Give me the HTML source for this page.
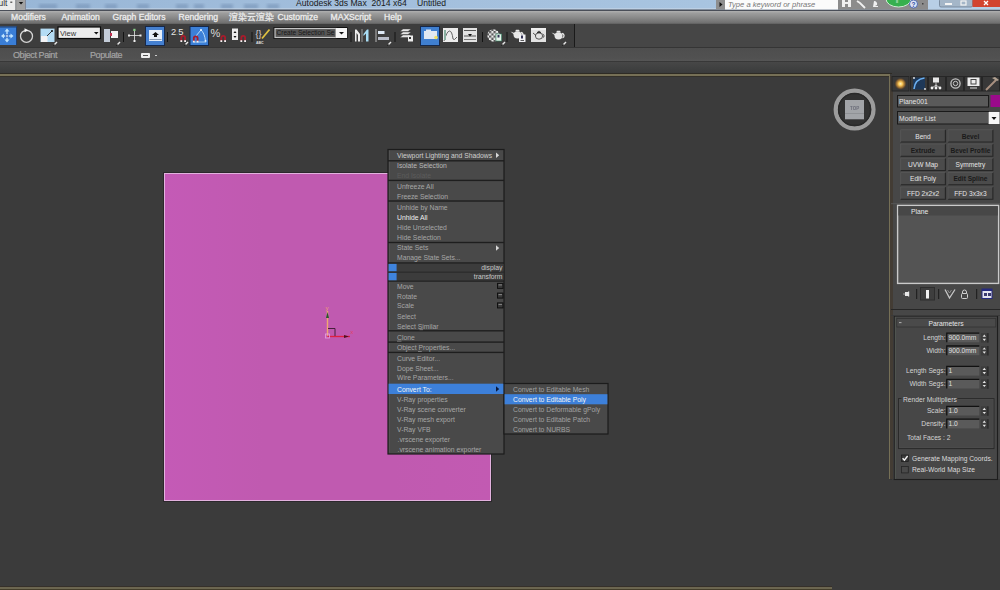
<!DOCTYPE html><html><head><meta charset="utf-8"><style>
*{margin:0;padding:0;box-sizing:border-box}
html,body{width:1000px;height:590px;overflow:hidden;background:#3b3b3b;font-family:"Liberation Sans",sans-serif;position:relative}
.a{position:absolute}
.t{position:absolute;white-space:nowrap;line-height:1}
.mt{color:#f4f4f4;font-size:8.6px;top:12.9px;-webkit-text-stroke:0.3px #e8e8e8}
.menu{background:#494949;}
.mi{position:absolute;font-size:6.8px;color:#a0a0a0;white-space:nowrap;line-height:1}
.sep{position:absolute;height:1px;background:#1c1c1c}
.pt{position:absolute;font-size:6.7px;color:#d0d0d0;white-space:nowrap;line-height:1}
.btn{position:absolute;background:#4c4c4c;border:1px solid #2a2a2a;border-top-color:#5a5a5a;border-left-color:#5a5a5a}
.fld{position:absolute;background:#5e5e5e;border:1px solid #1e1e1e}
</style></head><body>
<svg class="a" style="left:0;top:0" width="1000" height="11" viewBox="0 0 1000 11"><defs><linearGradient id="tg" x1="0" x2="1"><stop offset="0" stop-color="#98b6d6"/><stop offset="0.35" stop-color="#a2bedc"/><stop offset="0.7" stop-color="#a8c4e0"/><stop offset="1" stop-color="#b4cce4"/></linearGradient><filter id="bl"><feGaussianBlur stdDeviation="1.5"/></filter></defs><rect x="0" y="0" width="1000" height="10" fill="url(#tg)"/><g filter="url(#bl)" fill="#6f8cb0" opacity="0.55"><rect x="39.0" y="4" width="18" height="5"/><rect x="76.0" y="4" width="14" height="5"/><rect x="105.0" y="4" width="12" height="5"/><rect x="137.0" y="4" width="12" height="5"/><rect x="176.0" y="4" width="12" height="5"/><rect x="194.0" y="4" width="10" height="5"/><rect x="221.0" y="4" width="12" height="5"/><rect x="244.0" y="4" width="14" height="5"/><rect x="267.0" y="4" width="12" height="5"/></g><rect x="0" y="8.5" width="1000" height="1" fill="#d0dcea"/><rect x="0" y="9.5" width="1000" height="1.5" fill="#4a4e58"/><rect x="0" y="0" width="15.5" height="10" fill="#ececec"/><text x="-1.5" y="6" font-size="8.5" fill="#333" font-family="Liberation Sans">ult</text><rect x="10.3" y="1.5" width="2" height="1.5" fill="#666"/><rect x="15.5" y="0" width="10" height="10" fill="#a2a2a2"/><rect x="15.5" y="0" width="0.8" height="10" fill="#808080"/><rect x="25.2" y="0" width="0.8" height="10" fill="#7a8090"/><path d="M18.8 2 h4.4 l-2.2 2.4z" fill="#111"/><text x="296" y="6" font-size="8.6" fill="#1a1a1a" font-family="Liberation Sans">Autodesk 3ds Max&#160; 2014 x64</text><text x="417" y="6" font-size="8.6" fill="#1a1a1a" font-family="Liberation Sans">Untitled</text><rect x="716" y="0" width="9" height="9.5" fill="#8e8e8e"/><path d="M719.5 2 v5 l3 -2.5z" fill="#111"/><rect x="725" y="0" width="113" height="9.5" fill="#fbfbfb"/><text x="728" y="6.5" font-size="7.6" font-style="italic" fill="#777" font-family="Liberation Sans">Type a keyword or phrase</text><rect x="838" y="0" width="90" height="9.5" fill="#8c8c8c"/><g fill="#f0f0f0"><rect x="842" y="0" width="3" height="7"/><rect x="848" y="0" width="3" height="7"/><rect x="844" y="2" width="5" height="2"/></g><path d="M857 1 l3 2 l5 5" stroke="#f0f0f0" stroke-width="1.8" fill="none"/><path d="M874 1 a3 3 0 0 1 3 4 l-2 1 h3 v1 h-5z" fill="#f0f0f0"/><ellipse cx="898.5" cy="-1" rx="12.5" ry="8" fill="#36b04e" stroke="#cfeed4" stroke-width="1"/><text x="896" y="3" font-size="5" fill="#e8f8e8" font-family="Liberation Sans">ll</text><circle cx="913.5" cy="4" r="4" fill="#dde4f4" stroke="#3a5ab0" stroke-width="0.8"/><text x="911.5" y="6.8" font-size="6.5" fill="#2a4aa0" font-family="Liberation Sans" font-weight="bold">?</text><rect x="922" y="3" width="1.5" height="1.5" fill="#444"/><rect x="928" y="0" width="72" height="9.5" fill="#b8cfe6"/><rect x="939.5" y="-1" width="33" height="8" rx="1.5" fill="#a4b6c8" stroke="#6c7e92" stroke-width="0.8"/><rect x="945" y="3" width="7" height="2" fill="#f4f4f4"/><rect x="961" y="1" width="5" height="4" fill="none" stroke="#f4f4f4" stroke-width="1.2"/><rect x="972.5" y="-1" width="27.5" height="8" fill="#d24430"/><path d="M984 1 l4 4 M988 1 l-4 4" stroke="#fff" stroke-width="1.3"/></svg>
<div class="a" style="left:0;top:11px;width:1000px;height:13px;background:linear-gradient(#b0b0b0,#9c9c9c 18%,#8a8a8a 50%,#727272 88%,#5e5e5e)"></div>
<div class="t mt" style="left:11px">Modifiers</div>
<div class="t mt" style="left:61.5px">Animation</div>
<div class="t mt" style="left:112.5px">Graph Editors</div>
<div class="t mt" style="left:178.5px">Rendering</div>
<div class="t mt" style="left:229px">渲染云渲染</div>
<div class="t mt" style="left:277.5px">Customize</div>
<div class="t mt" style="left:330.5px">MAXScript</div>
<div class="t mt" style="left:384px">Help</div>
<div class="a" style="left:0;top:24px;width:1000px;height:24px;background:#464646"></div>
<div class="a" style="left:0;top:24px;width:575px;height:24px;background:#3d3d3d;border-right:1px solid #1a1a1a"></div>
<div class="a" style="left:0;top:47px;width:1000px;height:1px;background:#353535"></div>
<svg class="a" style="left:0;top:0" width="580" height="50" viewBox="0 0 580 50"><rect x="0" y="26.5" width="16.5" height="18.5" fill="#3a7ed6"/><rect x="0" y="26.5" width="16.5" height="1" fill="#1e3f70"/><rect x="16" y="26.5" width="1" height="18.5" fill="#1e3f70"/><g fill="#bfe4ff"><path d="M7 28.5 l2.5 3 h-5z"/><path d="M7 42.5 l2.5 -3 h-5z"/><path d="M1 36 l3 -2.5 v5z"/><path d="M13.5 36 l-3 -2.5 v5z"/><rect x="6.3" y="31" width="1.4" height="9"/><rect x="3" y="35.3" width="8" height="1.4"/></g><circle cx="7" cy="36" r="1.8" fill="#2a5ab0"/><circle cx="7" cy="36" r="0.9" fill="#e8f4ff"/><circle cx="26.5" cy="36.3" r="6" fill="none" stroke="#d4d4d4" stroke-width="1.3"/><path d="M24.5 28.3 l4 2 -4 2z" fill="#f4f4f4"/><rect x="40.5" y="28.6" width="14" height="13.4" fill="#b4dcf4"/><rect x="41" y="36" width="6.5" height="6" fill="#f2f2f4"/><path d="M47 36 L52 31" stroke="#333" stroke-width="1"/><circle cx="52" cy="31" r="1" fill="#111"/><path d="M54 45 L57 42" stroke="#e8e8e8" stroke-width="1.4"/><path d="M53.5 45.5 l1 -1" stroke="#111" stroke-width="1.2"/><rect x="58" y="27" width="42.5" height="11.5" fill="#ececec" stroke="#0a0a0a" stroke-width="1.2"/><path d="M94 32 h4.5 l-2.25 2.5z" fill="#111"/><text x="60" y="36" font-size="7.5" fill="#333" font-family="Liberation Sans">View</text><rect x="104" y="29" width="6" height="13" fill="#c4ccd8"/><rect x="111" y="31" width="7" height="7" fill="#f4f4f4"/><rect x="110" y="33" width="2" height="3" fill="#c03050"/><path d="M117 45 L120 42" stroke="#e8e8e8" stroke-width="1.4"/><path d="M116.5 45.5 l1 -1" stroke="#111" stroke-width="1.2"/><rect x="123" y="32" width="1" height="10" fill="#141414"/><path d="M129 35.5 h11 M134.5 30 v11" stroke="#e8e8e8" stroke-width="0.8"/><rect x="128" y="34.5" width="2" height="2" fill="#f0f0f0"/><rect x="139.5" y="34.5" width="2" height="2" fill="#f0f0f0"/><rect x="133.5" y="40" width="2" height="2" fill="#f0f0f0"/><rect x="133.3" y="28.8" width="2.2" height="2.2" fill="#8ad08a"/><rect x="145.5" y="26.5" width="19" height="19" fill="#4580d0" stroke="#16284a" stroke-width="1"/><rect x="149" y="30" width="13" height="11" fill="#e6eef8"/><rect x="149.5" y="39" width="12" height="1" fill="#8a9ab0"/><path d="M155.5 32 l3.5 3 h-2 v2 h-3 v-2 h-2z" fill="#111"/><rect x="167" y="32" width="1" height="10" fill="#141414"/><text x="171" y="35.3" font-size="9.3" fill="#e6e6e6" font-family="Liberation Sans">2</text><text x="178.3" y="35.3" font-size="9.3" fill="#e6e6e6" font-family="Liberation Sans">5</text><circle cx="177" cy="34.5" r="0.6" fill="#6a8a6a"/><path d="M181.3 41 V37.8 a1.9 1.9 0 0 1 3.8 0 V41" fill="none" stroke="#a81c2c" stroke-width="1.8"/><rect x="180.4" y="40.2" width="1.8" height="1.8" fill="#f4f4f4"/><rect x="184.2" y="40.2" width="1.8" height="1.8" fill="#f4f4f4"/><path d="M185 45 L188 42" stroke="#e8e8e8" stroke-width="1.4"/><path d="M184.5 45.5 l1 -1" stroke="#111" stroke-width="1.2"/><rect x="190" y="26.5" width="18.5" height="19" fill="#3c80d8" stroke="#16284a" stroke-width="1"/><path d="M195.5 36.5 L201 30 Q204.5 33 205.5 41" fill="none" stroke="#b8dcf8" stroke-width="1"/><circle cx="201" cy="30" r="1.1" fill="#e8f4ff"/><circle cx="205.5" cy="41" r="1" fill="#e8f4ff"/><path d="M194 42 h12" stroke="#b8dcf8" stroke-width="0.8"/><path d="M193.8 41.5 V38.3 a1.9 1.9 0 0 1 3.8 0 V41.5" fill="none" stroke="#a81c2c" stroke-width="1.8"/><rect x="192.9" y="40.7" width="1.8" height="1.8" fill="#f4f4f4"/><rect x="196.7" y="40.7" width="1.8" height="1.8" fill="#f4f4f4"/><text x="210.5" y="36.5" font-size="11" fill="#dcdcdc" font-family="Liberation Sans">%</text><path d="M221.3 41 V37.8 a1.9 1.9 0 0 1 3.8 0 V41" fill="none" stroke="#a81c2c" stroke-width="1.8"/><rect x="220.4" y="40.2" width="1.8" height="1.8" fill="#f4f4f4"/><rect x="224.2" y="40.2" width="1.8" height="1.8" fill="#f4f4f4"/><rect x="232" y="28.5" width="6" height="11.5" fill="#ececec"/><path d="M233.5 33 l1.5 -2 l1.5 2z M233.5 36 l1.5 2 l1.5 -2z" fill="#111"/><path d="M241.3 41 V37.8 a1.9 1.9 0 0 1 3.8 0 V41" fill="none" stroke="#a81c2c" stroke-width="1.8"/><rect x="240.4" y="40.2" width="1.8" height="1.8" fill="#f4f4f4"/><rect x="244.2" y="40.2" width="1.8" height="1.8" fill="#f4f4f4"/><rect x="251.5" y="32" width="1" height="10" fill="#141414"/><text x="255.5" y="37" font-size="9" fill="#dcdcdc" font-family="Liberation Sans">{}</text><path d="M262 38.5 L269.5 29.5" stroke="#e0c040" stroke-width="1.8"/><text x="256" y="44" font-size="3.5" fill="#e0e0e0" font-family="Liberation Sans" font-weight="bold">ABC</text><rect x="273.5" y="27" width="74" height="12" fill="#111"/><rect x="275" y="28.5" width="61" height="9" fill="#565656" stroke="#c4c4c4" stroke-width="1.2"/><rect x="336" y="28" width="11" height="10" fill="#f6f6f6"/><path d="M339 32 h5 l-2.5 2.5z" fill="#111"/><text x="276.5" y="35.3" font-size="6.9" fill="#161616" font-family="Liberation Sans" textLength="58" lengthAdjust="spacingAndGlyphs">Create Selection Se</text><rect x="350.5" y="32" width="1" height="10" fill="#141414"/><path d="M355 41.5 V29.5 h1.5 l3.5 4.5 V41.5 h-2 V35 l-1.5 -2 V41.5z" fill="#ececec"/><rect x="361.5" y="29" width="1" height="13" fill="#9a9a9a"/><path d="M368.5 41.5 V29.5 h-1.5 l-3.5 4.5 V36 l2.5 -2.5 V41.5z" fill="#a8dcf4"/><rect x="375.5" y="29" width="1" height="13" fill="#b8b8b8"/><rect x="378" y="31" width="6.5" height="3" fill="#dde8f4"/><rect x="378" y="37" width="11" height="3" fill="#b8bcc8"/><path d="M388 45 L391 42" stroke="#e8e8e8" stroke-width="1.4"/><path d="M387.5 45.5 l1 -1" stroke="#111" stroke-width="1.2"/><rect x="394.5" y="32" width="1" height="10" fill="#141414"/><path d="M400 31.5 l3 -2.5 h8 l-3 2.5z M400 34.5 l3 -2.5 h8 l-3 2.5z M400 37.5 l3 -2.5 h8 l-3 2.5z" fill="#e6e6e6" stroke="#3d3d3d" stroke-width="0.4"/><rect x="408" y="35.5" width="5" height="6" fill="#ececec"/><rect x="409" y="37" width="2" height="2" fill="#333"/><rect x="420.5" y="26.5" width="19" height="19" fill="#3f7fd0" stroke="#16284a" stroke-width="1"/><rect x="424" y="31" width="13" height="8" fill="#dfe8f2"/><rect x="426" y="29.5" width="5" height="2" fill="#dfe8f2"/><circle cx="436" cy="37.5" r="1.8" fill="#f0e060"/><rect x="443" y="28" width="15" height="14" fill="#ececec"/><path d="M444 41 Q447 31 449.5 31 Q452 31 453 39 Q454 41 457 37" fill="none" stroke="#555" stroke-width="0.9"/><rect x="444" y="30" width="2" height="10" fill="#8ab0a0"/><rect x="463" y="28" width="14" height="14" fill="#e2e2e2"/><rect x="464" y="30" width="12" height="1" fill="#555"/><rect x="464" y="35.5" width="12" height="1" fill="#555"/><rect x="464" y="39" width="12" height="1" fill="#777"/><path d="M468 34 h4 l-2 2.5z" fill="#111"/><rect x="482" y="32" width="1" height="10" fill="#141414"/><defs><pattern id="chk" width="4.5" height="4.5" patternUnits="userSpaceOnUse" x="489" y="31"><rect width="4.5" height="4.5" fill="#ececec"/><rect width="2.25" height="2.25" fill="#5a5a5a"/><rect x="2.25" y="2.25" width="2.25" height="2.25" fill="#5a5a5a"/></pattern></defs><circle cx="493.5" cy="35.5" r="6.2" fill="url(#chk)"/><rect x="496" y="34" width="5.5" height="7" fill="#e8f4ec" stroke="#3a8a6a" stroke-width="0.6"/><rect x="497.5" y="35" width="2" height="2.5" fill="#335"/><path d="M502 45 L505 42" stroke="#e8e8e8" stroke-width="1.4"/><path d="M501.5 45.5 l1 -1" stroke="#111" stroke-width="1.2"/><rect x="506.5" y="32" width="1" height="10" fill="#141414"/><g fill="#e8e8e8"><path d="M510.5 31.5 L514.0 34.5 L514.5 33.0z"/><ellipse cx="517.5" cy="34.8" rx="4" ry="3.6"/><path d="M521.0 32.5 a2.2 2.2 0 0 1 0.5 4.3" fill="none" stroke="#e8e8e8" stroke-width="1.3"/><rect x="515.5" y="29.8" width="4" height="1.8" rx="0.9"/></g><rect x="519" y="34.5" width="6.5" height="7.5" fill="#f0f0f4"/><rect x="521" y="35.5" width="2" height="3" fill="#335"/><rect x="520.5" y="40" width="3.5" height="0.8" fill="#333"/><rect x="531" y="28" width="15" height="14" fill="#e2e2e2"/><rect x="531" y="28" width="15" height="2" fill="#f0f0f0"/><path d="M533 33 L536 35.5" stroke="#333" stroke-width="0.8"/><ellipse cx="539" cy="36" rx="3.6" ry="3.2" fill="none" stroke="#333" stroke-width="0.8"/><path d="M542.5 34 a2 2 0 0 1 0.3 3.8" fill="none" stroke="#333" stroke-width="0.8"/><rect x="537" y="31.8" width="4" height="1.3" fill="#333"/><circle cx="539" cy="31.5" r="0.7" fill="#111"/><g fill="#e6e6e6"><path d="M551.5 32.5 L555.0 35.5 L555.5 34.0z"/><ellipse cx="558.5" cy="35.8" rx="4" ry="3.6"/><path d="M562.0 33.5 a2.2 2.2 0 0 1 0.5 4.3" fill="none" stroke="#e6e6e6" stroke-width="1.3"/><rect x="556.5" y="30.8" width="4" height="1.8" rx="0.9"/></g><path d="M563 45 L566 42" stroke="#e8e8e8" stroke-width="1.4"/><path d="M562.5 45.5 l1 -1" stroke="#111" stroke-width="1.2"/></svg>
<div class="a" style="left:0;top:48px;width:1000px;height:13px;background:linear-gradient(#4e4e4e,#515151 80%,#555)"></div>
<div class="t" style="left:13px;top:51.2px;font-size:9px;letter-spacing:-0.42px;color:#a6a6a6;-webkit-text-stroke:0.2px #a0a0a0">Object Paint</div>
<div class="t" style="left:90px;top:51.2px;font-size:9px;letter-spacing:-0.42px;color:#a6a6a6;-webkit-text-stroke:0.2px #a0a0a0">Populate</div>
<div class="a" style="left:141px;top:52.5px;width:9px;height:5px;background:#f0f0f0;border-radius:1px"></div>
<div class="a" style="left:143px;top:54.5px;width:5px;height:1px;background:#555"></div>
<div class="a" style="left:155px;top:55px;width:2px;height:1px;background:#ccc"></div>
<div class="a" style="left:0;top:61px;width:1000px;height:1px;background:#383838"></div>
<div class="a" style="left:0;top:62px;width:1000px;height:11px;background:linear-gradient(#474747,#3f4040 60%,#3a3b3b)"></div>
<div class="a" style="left:0;top:72.5px;width:892px;height:1.5px;background:#2e2b24"></div>
<div class="a" style="left:0;top:74px;width:890px;height:1.5px;background:#767056"></div>
<div class="a" style="left:0;top:75.5px;width:889px;height:1px;background:#34312a"></div>
<div class="a" style="left:888.8px;top:74px;width:1.4px;height:405px;background:#767056"></div>
<div class="a" style="left:890.2px;top:75.5px;width:1.5px;height:404px;background:#333"></div>
<div class="a" style="left:0;top:585.5px;width:832px;height:1.5px;background:#36302a"></div>
<div class="a" style="left:0;top:587px;width:832px;height:1.6px;background:#6c6650"></div>
<div class="a" style="left:0;top:588.6px;width:832px;height:1.4px;background:#433d2a"></div>
<svg class="a" style="left:820px;top:80px" width="70" height="60" viewBox="820 80 70 60"><defs><filter id="vb"><feGaussianBlur stdDeviation="0.5"/></filter></defs><g filter="url(#vb)"><circle cx="854.6" cy="109.6" r="18.8" fill="#323232" stroke="#9c9c9c" stroke-width="4.4"/><circle cx="854.6" cy="109.6" r="16" fill="none" stroke="#2a2a2a" stroke-width="1.5"/><rect x="845" y="100" width="19" height="19.3" fill="#a2a4a8"/><rect x="845" y="113" width="19" height="1" fill="#909296"/><text x="850" y="109.5" font-size="4.5" fill="#6a6c78" font-family="Liberation Sans" font-weight="bold">TOP</text></g></svg>
<div class="a" style="left:164px;top:173px;width:327px;height:328px;background:linear-gradient(90deg,#c45ab6,#c05ab0 30%,#c05ab0 70%,#c25ab2);border:1.8px solid #e2b2de;box-shadow:0 0 0 1px #2c282c"></div>
<svg class="a" style="left:310px;top:295px" width="60" height="50" viewBox="310 295 60 50"><path d="M327.5 311 V336" stroke="#f0a870" stroke-width="1.4"/><path d="M326 318 l1.5 -6 l1.5 6z" fill="#2a5a2a"/><path d="M327.5 336.5 H350" stroke="#e02040" stroke-width="1.3"/><path d="M344 335 l5 1.5 l-5 1.5z" fill="#501020"/><path d="M328 328.5 H335 V336" fill="none" stroke="#3a1a30" stroke-width="0.9"/><rect x="325.5" y="334" width="4" height="4" fill="none" stroke="#e8a0e0" stroke-width="0.8"/><text x="325.5" y="310" font-size="6" fill="#f0a070" font-family="Liberation Sans">y</text><text x="350.5" y="334" font-size="5.5" fill="#e04060" font-family="Liberation Sans">x</text></svg>
<svg class="a" style="left:380px;top:140px" width="240" height="320" viewBox="380 140 240 320"><rect x="388" y="149.5" width="116" height="304.5" fill="#494949" stroke="#1c1c1c" stroke-width="1.2"/><rect x="389" y="150.5" width="0.8" height="302" fill="#555"/><rect x="388" y="160.1" width="116" height="1.4" fill="#1e1e1e"/><rect x="388" y="179.7" width="116" height="1.4" fill="#1e1e1e"/><rect x="388" y="200.3" width="116" height="1.4" fill="#1e1e1e"/><rect x="388" y="241.8" width="116" height="1.4" fill="#1e1e1e"/><rect x="388" y="262.3" width="116" height="1.4" fill="#1e1e1e"/><rect x="388" y="280.3" width="116" height="1.4" fill="#1e1e1e"/><rect x="388" y="330.1" width="116" height="1.4" fill="#1e1e1e"/><rect x="388" y="341.4" width="116" height="1.4" fill="#1e1e1e"/><rect x="388" y="351.7" width="116" height="1.4" fill="#1e1e1e"/><rect x="388.6" y="263.9" width="114.8" height="7.6" fill="#3c3c3c"/><rect x="388.6" y="263.9" width="8" height="7.6" fill="#3f84de"/><text x="502.5" y="269.7" text-anchor="end" font-size="6.8" fill="#c8c8c8" font-family="Liberation Sans">display</text><rect x="388.6" y="272.7" width="114.8" height="7.6" fill="#3c3c3c"/><rect x="388.6" y="272.7" width="8" height="7.6" fill="#3f84de"/><text x="502.5" y="278.5" text-anchor="end" font-size="6.8" fill="#c8c8c8" font-family="Liberation Sans">transform</text><rect x="388.6" y="271.5" width="114.8" height="1.2" fill="#262626"/><path d="M496 152.4 v5.5 l3.2 -2.75z" fill="#d8d8d8"/><text x="397" y="157.6" font-size="6.8" fill="#cfcfcf" font-family="Liberation Sans">Viewport Lighting and Shadows</text><text x="397" y="167.8" font-size="6.8" fill="#b8b8b8" font-family="Liberation Sans">Isolate Selection</text><text x="397" y="177.6" font-size="6.8" fill="#5c5c5c" font-family="Liberation Sans">End Isolate</text><text x="397" y="188.8" font-size="6.8" fill="#a6a6a6" font-family="Liberation Sans">Unfreeze All</text><text x="397" y="198.6" font-size="6.8" fill="#a6a6a6" font-family="Liberation Sans">Freeze Selection</text><text x="397" y="209.9" font-size="6.8" fill="#a6a6a6" font-family="Liberation Sans">Unhide by Name</text><text x="397" y="219.7" font-size="6.8" fill="#eeeeee" font-family="Liberation Sans">Unhide All</text><text x="397" y="230.0" font-size="6.8" fill="#a6a6a6" font-family="Liberation Sans">Hide Unselected</text><text x="397" y="239.7" font-size="6.8" fill="#a6a6a6" font-family="Liberation Sans">Hide Selection</text><path d="M496 245.2 v5.5 l3.2 -2.75z" fill="#d8d8d8"/><text x="397" y="250.4" font-size="6.8" fill="#a6a6a6" font-family="Liberation Sans">State Sets</text><text x="397" y="260.2" font-size="6.8" fill="#a6a6a6" font-family="Liberation Sans">Manage State Sets...</text><rect x="497.5" y="283.4" width="5.5" height="5" fill="#3a3a3a" stroke="#111" stroke-width="1"/><rect x="498.5" y="284.4" width="3.5" height="1" fill="#888"/><text x="397" y="288.9" font-size="6.8" fill="#a6a6a6" font-family="Liberation Sans">Move</text><rect x="497.5" y="293.1" width="5.5" height="5" fill="#3a3a3a" stroke="#111" stroke-width="1"/><rect x="498.5" y="294.1" width="3.5" height="1" fill="#888"/><text x="397" y="298.6" font-size="6.8" fill="#a6a6a6" font-family="Liberation Sans">Rotate</text><rect x="497.5" y="302.9" width="5.5" height="5" fill="#3a3a3a" stroke="#111" stroke-width="1"/><rect x="498.5" y="303.9" width="3.5" height="1" fill="#888"/><text x="397" y="308.4" font-size="6.8" fill="#a6a6a6" font-family="Liberation Sans">Scale</text><text x="397" y="318.7" font-size="6.8" fill="#a6a6a6" font-family="Liberation Sans">Select</text><text x="397" y="328.5" font-size="6.8" fill="#a6a6a6" font-family="Liberation Sans">Select Similar</text><text x="397" y="339.8" font-size="6.8" fill="#a6a6a6" font-family="Liberation Sans">Clone</text><text x="397" y="350.0" font-size="6.8" fill="#a6a6a6" font-family="Liberation Sans">Object Properties...</text><text x="397" y="360.8" font-size="6.8" fill="#a6a6a6" font-family="Liberation Sans">Curve Editor...</text><text x="397" y="370.5" font-size="6.8" fill="#a6a6a6" font-family="Liberation Sans">Dope Sheet...</text><text x="397" y="380.3" font-size="6.8" fill="#a6a6a6" font-family="Liberation Sans">Wire Parameters...</text><rect x="388.6" y="383.7" width="115.4" height="10.3" fill="#3d80da"/><path d="M496 386.2 v5.5 l3.2 -2.75z" fill="#0c1a3c"/><text x="397" y="391.6" font-size="6.8" fill="#f4f4f4" font-family="Liberation Sans">Convert To:</text><text x="397" y="401.9" font-size="6.8" fill="#a6a6a6" font-family="Liberation Sans">V-Ray properties</text><text x="397" y="411.7" font-size="6.8" fill="#a6a6a6" font-family="Liberation Sans">V-Ray scene converter</text><text x="397" y="421.5" font-size="6.8" fill="#a6a6a6" font-family="Liberation Sans">V-Ray mesh export</text><text x="397" y="431.5" font-size="6.8" fill="#a6a6a6" font-family="Liberation Sans">V-Ray VFB</text><text x="397.5" y="441.8" font-size="6.8" fill="#a6a6a6" font-family="Liberation Sans">.vrscene exporter</text><text x="397.5" y="451.8" font-size="6.8" fill="#a6a6a6" font-family="Liberation Sans">.vrscene animation exporter</text><rect x="419.5" y="329.5" width="3.5" height="0.6" fill="#a6a6a6"/><rect x="397" y="340.8" width="4.5" height="0.6" fill="#a6a6a6"/><rect x="418" y="351" width="3.8" height="0.6" fill="#a6a6a6"/><rect x="504" y="383.5" width="104" height="50.5" fill="#494949" stroke="#1c1c1c" stroke-width="1.2"/><rect x="504.6" y="394.2" width="102.8" height="10.1" fill="#3d80da"/><text x="513" y="391.6" font-size="6.8" fill="#a2a2a2" font-family="Liberation Sans">Convert to Editable Mesh</text><text x="513" y="401.8" font-size="6.8" fill="#f4f4f4" font-family="Liberation Sans">Convert to Editable Poly</text><text x="513" y="411.7" font-size="6.8" fill="#a2a2a2" font-family="Liberation Sans">Convert to Deformable gPoly</text><text x="513" y="421.5" font-size="6.8" fill="#a2a2a2" font-family="Liberation Sans">Convert to Editable Patch</text><text x="513" y="431.5" font-size="6.8" fill="#a2a2a2" font-family="Liberation Sans">Convert to NURBS</text></svg>
<div class="a" style="left:890.2px;top:76px;width:2.8px;height:403px;background:#433c34"></div><div class="a" style="left:893px;top:76px;width:107px;height:403px;background:#474747"></div>
<svg class="a" style="left:880px;top:70px" width="120" height="25" viewBox="880 70 120 25"><defs><radialGradient id="sun"><stop offset="0" stop-color="#fff4c0"/><stop offset="0.35" stop-color="#f4c050"/><stop offset="0.7" stop-color="#b07830" stop-opacity="0.7"/><stop offset="1" stop-color="#5a3a20" stop-opacity="0"/></radialGradient></defs><rect x="892" y="76.5" width="17" height="14.5" fill="#383838" stroke="#262626" stroke-width="1"/><rect x="910.5" y="76.5" width="17" height="14.5" fill="#383838" stroke="#262626" stroke-width="1"/><rect x="928.5" y="76.5" width="17" height="14.5" fill="#383838" stroke="#262626" stroke-width="1"/><rect x="946.5" y="76.5" width="17" height="14.5" fill="#383838" stroke="#262626" stroke-width="1"/><rect x="964.5" y="76.5" width="17" height="14.5" fill="#383838" stroke="#262626" stroke-width="1"/><rect x="982.5" y="76.5" width="17" height="14.5" fill="#383838" stroke="#262626" stroke-width="1"/><circle cx="900.5" cy="83.8" r="6.2" fill="url(#sun)"/><rect x="913" y="77.5" width="12" height="12" fill="#1e3858"/><path d="M914 89 Q915 79 924.5 78" stroke="#6cb0f0" stroke-width="1.6" fill="none"/><circle cx="914" cy="78" r="0.9" fill="#eee"/><circle cx="925" cy="89" r="0.9" fill="#eee"/><rect x="933" y="77.5" width="6" height="5" fill="#e8e8e8"/><path d="M936 82.5 v3 M932 88 L936 85 L940 88 M936 85 v3" stroke="#ddd" stroke-width="0.8" fill="none"/><circle cx="932" cy="88" r="1.4" fill="#f0f0f0"/><circle cx="936" cy="88" r="1.4" fill="#f0f0f0"/><circle cx="940" cy="88" r="1.4" fill="#f0f0f0"/><circle cx="955.5" cy="83.5" r="4.6" fill="none" stroke="#c4c4c4" stroke-width="1.3"/><circle cx="955.5" cy="83.5" r="2.2" fill="none" stroke="#c4c4c4" stroke-width="1"/><rect x="967.5" y="77.5" width="12" height="8.5" fill="#ececec"/><rect x="971" y="79.5" width="5" height="4.5" fill="none" stroke="#444" stroke-width="1"/><rect x="970" y="87.5" width="7" height="1" fill="#ddd"/><path d="M986 90 L996 80" stroke="#a89080" stroke-width="2"/><path d="M992 78 l3 -1 l4 3 l-2 1z" fill="#b0a090"/></svg>
<svg class="a" style="left:880px;top:90px" width="120" height="400" viewBox="880 90 120 400"><rect x="897.5" y="95.5" width="91" height="11.5" fill="#5a5a5a" stroke="#1a1a1a" stroke-width="1"/><text x="899" y="103.9" font-size="6.8" fill="#e4e4e4" font-family="Liberation Sans" text-anchor="start" >Plane001</text><rect x="990.5" y="95" width="9.5" height="12" fill="#9a0a8a"/><rect x="897.5" y="111.5" width="91" height="12.5" fill="#575757" stroke="#1a1a1a" stroke-width="1"/><text x="899" y="120.6" font-size="6.8" fill="#e4e4e4" font-family="Liberation Sans" text-anchor="start" >Modifier List</text><rect x="988.5" y="112" width="11" height="12" fill="#f6f6f6"/><path d="M991.5 117 h5 l-2.5 3z" fill="#111"/><rect x="900.6" y="129.7" width="44.8" height="12.3" fill="#4b4b4b"/><path d="M900.6 142.0 H945.4 V129.7" fill="none" stroke="#262626" stroke-width="1.1"/><path d="M900.6 142.0 V129.7 H945.4" fill="none" stroke="#5a5a5a" stroke-width="0.7"/><text x="923.0" y="138.6" font-size="6.6" fill="#e4e4e4" font-family="Liberation Sans" text-anchor="middle" >Bend</text><rect x="948" y="129.7" width="44.9" height="12.3" fill="#4b4b4b"/><path d="M948 142.0 H992.9 V129.7" fill="none" stroke="#262626" stroke-width="1.1"/><path d="M948 142.0 V129.7 H992.9" fill="none" stroke="#5a5a5a" stroke-width="0.7"/><text x="970.45" y="138.6" font-size="6.6" fill="#1a1a1a" font-family="Liberation Sans" text-anchor="middle" font-weight="bold">Bevel</text><rect x="900.6" y="144" width="44.8" height="12.3" fill="#4b4b4b"/><path d="M900.6 156.3 H945.4 V144" fill="none" stroke="#262626" stroke-width="1.1"/><path d="M900.6 156.3 V144 H945.4" fill="none" stroke="#5a5a5a" stroke-width="0.7"/><text x="923.0" y="152.8" font-size="6.6" fill="#1a1a1a" font-family="Liberation Sans" text-anchor="middle" font-weight="bold">Extrude</text><rect x="948" y="144" width="44.9" height="12.3" fill="#4b4b4b"/><path d="M948 156.3 H992.9 V144" fill="none" stroke="#262626" stroke-width="1.1"/><path d="M948 156.3 V144 H992.9" fill="none" stroke="#5a5a5a" stroke-width="0.7"/><text x="970.45" y="152.8" font-size="6.6" fill="#1a1a1a" font-family="Liberation Sans" text-anchor="middle" font-weight="bold">Bevel Profile</text><rect x="900.6" y="158.2" width="44.8" height="12.3" fill="#4b4b4b"/><path d="M900.6 170.5 H945.4 V158.2" fill="none" stroke="#262626" stroke-width="1.1"/><path d="M900.6 170.5 V158.2 H945.4" fill="none" stroke="#5a5a5a" stroke-width="0.7"/><text x="923.0" y="167" font-size="6.6" fill="#e4e4e4" font-family="Liberation Sans" text-anchor="middle" >UVW Map</text><rect x="948" y="158.2" width="44.9" height="12.3" fill="#4b4b4b"/><path d="M948 170.5 H992.9 V158.2" fill="none" stroke="#262626" stroke-width="1.1"/><path d="M948 170.5 V158.2 H992.9" fill="none" stroke="#5a5a5a" stroke-width="0.7"/><text x="970.45" y="167" font-size="6.6" fill="#e4e4e4" font-family="Liberation Sans" text-anchor="middle" >Symmetry</text><rect x="900.6" y="172.5" width="44.8" height="12.3" fill="#4b4b4b"/><path d="M900.6 184.8 H945.4 V172.5" fill="none" stroke="#262626" stroke-width="1.1"/><path d="M900.6 184.8 V172.5 H945.4" fill="none" stroke="#5a5a5a" stroke-width="0.7"/><text x="923.0" y="181.3" font-size="6.6" fill="#e4e4e4" font-family="Liberation Sans" text-anchor="middle" >Edit Poly</text><rect x="948" y="172.5" width="44.9" height="12.3" fill="#4b4b4b"/><path d="M948 184.8 H992.9 V172.5" fill="none" stroke="#262626" stroke-width="1.1"/><path d="M948 184.8 V172.5 H992.9" fill="none" stroke="#5a5a5a" stroke-width="0.7"/><text x="970.45" y="181.3" font-size="6.6" fill="#1a1a1a" font-family="Liberation Sans" text-anchor="middle" font-weight="bold">Edit Spline</text><rect x="900.6" y="187" width="44.8" height="12.3" fill="#4b4b4b"/><path d="M900.6 199.3 H945.4 V187" fill="none" stroke="#262626" stroke-width="1.1"/><path d="M900.6 199.3 V187 H945.4" fill="none" stroke="#5a5a5a" stroke-width="0.7"/><text x="923.0" y="195.8" font-size="6.6" fill="#e4e4e4" font-family="Liberation Sans" text-anchor="middle" >FFD 2x2x2</text><rect x="948" y="187" width="44.9" height="12.3" fill="#4b4b4b"/><path d="M948 199.3 H992.9 V187" fill="none" stroke="#262626" stroke-width="1.1"/><path d="M948 199.3 V187 H992.9" fill="none" stroke="#5a5a5a" stroke-width="0.7"/><text x="970.45" y="195.8" font-size="6.6" fill="#e4e4e4" font-family="Liberation Sans" text-anchor="middle" >FFD 3x3x3</text><rect x="891" y="203.2" width="109" height="1" fill="#585858"/><rect x="897.6" y="205.4" width="101" height="78" fill="#545454" stroke="#cacaca" stroke-width="1.4"/><rect x="898.4" y="206.2" width="99.4" height="9.3" fill="#474747"/><text x="911" y="213.5" font-size="6.8" fill="#e8e8e8" font-family="Liberation Sans" text-anchor="start" >Plane</text><rect x="894.2" y="316" width="103.3" height="163.5" fill="none" stroke="#1e1e1e" stroke-width="1.1"/><path d="M895.4 317 V479" stroke="#545a54" stroke-width="0.8"/><rect x="896.8" y="318.4" width="99" height="8.6" fill="#4a4a4a" stroke="#333" stroke-width="0.8"/><rect x="899" y="322.3" width="2.5" height="0.8" fill="#cfcfcf"/><text x="946" y="325.5" font-size="6.8" fill="#e4e4e4" font-family="Liberation Sans" text-anchor="middle" >Parameters</text><text x="945.5" y="340.1" font-size="6.7" fill="#d4d4d4" font-family="Liberation Sans" text-anchor="end" >Length:</text><rect x="946.8" y="333.1" width="32.5" height="9.2" fill="#5a5a5a"/><path d="M946.8 342.3 V333.1 H979.3" fill="none" stroke="#111" stroke-width="1.3"/><text x="948.5" y="340.1" font-size="6.7" fill="#e0e0e0" font-family="Liberation Sans" text-anchor="start" >900.0mm</text><rect x="981" y="333.1" width="6.5" height="9.5" fill="#3c3c3c"/><rect x="987.5" y="333.1" width="0.9" height="9.5" fill="#1a1a1a"/><path d="M982.6 336.7 l1.7 -2.2 l1.7 2.2z M982.6 338.7 l1.7 2.2 l1.7 -2.2z" fill="#e4e4e4"/><text x="945.5" y="353.0" font-size="6.7" fill="#d4d4d4" font-family="Liberation Sans" text-anchor="end" >Width:</text><rect x="946.8" y="346.0" width="32.5" height="9.2" fill="#5a5a5a"/><path d="M946.8 355.2 V346.0 H979.3" fill="none" stroke="#111" stroke-width="1.3"/><text x="948.5" y="353.0" font-size="6.7" fill="#e0e0e0" font-family="Liberation Sans" text-anchor="start" >900.0mm</text><rect x="981" y="346.0" width="6.5" height="9.5" fill="#3c3c3c"/><rect x="987.5" y="346.0" width="0.9" height="9.5" fill="#1a1a1a"/><path d="M982.6 349.6 l1.7 -2.2 l1.7 2.2z M982.6 351.6 l1.7 2.2 l1.7 -2.2z" fill="#e4e4e4"/><text x="945.5" y="373.4" font-size="6.7" fill="#d4d4d4" font-family="Liberation Sans" text-anchor="end" >Length Segs:</text><rect x="946.8" y="366.4" width="32.5" height="9.2" fill="#5a5a5a"/><path d="M946.8 375.6 V366.4 H979.3" fill="none" stroke="#111" stroke-width="1.3"/><text x="948.5" y="373.4" font-size="6.7" fill="#e0e0e0" font-family="Liberation Sans" text-anchor="start" >1</text><rect x="981" y="366.4" width="6.5" height="9.5" fill="#3c3c3c"/><rect x="987.5" y="366.4" width="0.9" height="9.5" fill="#1a1a1a"/><path d="M982.6 370.0 l1.7 -2.2 l1.7 2.2z M982.6 372.0 l1.7 2.2 l1.7 -2.2z" fill="#e4e4e4"/><text x="945.5" y="386.3" font-size="6.7" fill="#d4d4d4" font-family="Liberation Sans" text-anchor="end" >Width Segs:</text><rect x="946.8" y="379.3" width="32.5" height="9.2" fill="#5a5a5a"/><path d="M946.8 388.5 V379.3 H979.3" fill="none" stroke="#111" stroke-width="1.3"/><text x="948.5" y="386.3" font-size="6.7" fill="#e0e0e0" font-family="Liberation Sans" text-anchor="start" >1</text><rect x="981" y="379.3" width="6.5" height="9.5" fill="#3c3c3c"/><rect x="987.5" y="379.3" width="0.9" height="9.5" fill="#1a1a1a"/><path d="M982.6 382.9 l1.7 -2.2 l1.7 2.2z M982.6 384.9 l1.7 2.2 l1.7 -2.2z" fill="#e4e4e4"/><rect x="898.5" y="398.6" width="95.5" height="50" fill="none" stroke="#2a2a2a" stroke-width="1"/><rect x="899.5" y="399.6" width="93.5" height="48" fill="none" stroke="#4e4e4e" stroke-width="0.6"/><rect x="901.5" y="396" width="56" height="6" fill="#464646"/><text x="903" y="401.5" font-size="6.7" fill="#d4d4d4" font-family="Liberation Sans" text-anchor="start" >Render Multipliers</text><text x="945.5" y="413.3" font-size="6.7" fill="#d4d4d4" font-family="Liberation Sans" text-anchor="end" >Scale:</text><rect x="946.8" y="406.3" width="32.5" height="9.2" fill="#5a5a5a"/><path d="M946.8 415.5 V406.3 H979.3" fill="none" stroke="#111" stroke-width="1.3"/><text x="948.5" y="413.3" font-size="6.7" fill="#e0e0e0" font-family="Liberation Sans" text-anchor="start" >1.0</text><rect x="981" y="406.3" width="6.5" height="9.5" fill="#3c3c3c"/><rect x="987.5" y="406.3" width="0.9" height="9.5" fill="#1a1a1a"/><path d="M982.6 409.9 l1.7 -2.2 l1.7 2.2z M982.6 411.9 l1.7 2.2 l1.7 -2.2z" fill="#e4e4e4"/><text x="945.5" y="426.2" font-size="6.7" fill="#d4d4d4" font-family="Liberation Sans" text-anchor="end" >Density:</text><rect x="946.8" y="419.2" width="32.5" height="9.2" fill="#5a5a5a"/><path d="M946.8 428.4 V419.2 H979.3" fill="none" stroke="#111" stroke-width="1.3"/><text x="948.5" y="426.2" font-size="6.7" fill="#e0e0e0" font-family="Liberation Sans" text-anchor="start" >1.0</text><rect x="981" y="419.2" width="6.5" height="9.5" fill="#3c3c3c"/><rect x="987.5" y="419.2" width="0.9" height="9.5" fill="#1a1a1a"/><path d="M982.6 422.8 l1.7 -2.2 l1.7 2.2z M982.6 424.8 l1.7 2.2 l1.7 -2.2z" fill="#e4e4e4"/><text x="907" y="440.4" font-size="6.7" fill="#d4d4d4" font-family="Liberation Sans" text-anchor="start" >Total Faces : 2</text><rect x="901.5" y="455" width="6.8" height="6.5" fill="#3a3a3a" stroke="#202020" stroke-width="0.8"/><path d="M902.6 458.2 l1.8 2 l3.2 -4.2" fill="none" stroke="#f4f4f4" stroke-width="1.4"/><text x="912" y="461" font-size="6.7" fill="#dcdcdc" font-family="Liberation Sans" text-anchor="start" >Generate Mapping Coords.</text><rect x="901.5" y="466.4" width="6.8" height="6.5" fill="#4a4a4a" stroke="#262626" stroke-width="0.8"/><text x="912" y="472.4" font-size="6.7" fill="#dcdcdc" font-family="Liberation Sans" text-anchor="start" >Real-World Map Size</text></svg>
<svg class="a" style="left:890px;top:280px" width="110" height="25" viewBox="890 280 110 25"><path d="M903 294 h2" stroke="#bbb" stroke-width="0.8"/><rect x="905" y="292" width="3" height="4" fill="#e8e8e8"/><rect x="908" y="291.5" width="1.2" height="5" fill="#e8e8e8"/><rect x="916" y="289" width="1.2" height="10" fill="#222"/><rect x="920.5" y="287.5" width="14" height="12.5" fill="#3e3e3e" stroke="#2e2e2e" stroke-width="1"/><rect x="926" y="290" width="3" height="8.5" fill="#f2f2f2"/><rect x="938" y="289" width="1.2" height="10" fill="#222"/><path d="M945 289.5 L949.5 298 L955 289.5" fill="none" stroke="#c8c8c8" stroke-width="1.3"/><path d="M947.5 290 l2 3 l2 -3" fill="none" stroke="#999" stroke-width="0.8"/><rect x="961.5" y="293.5" width="6" height="5" rx="1" fill="none" stroke="#d0d0d0" stroke-width="1"/><path d="M962.5 293.5 v-1.5 a2 2 0 0 1 4 0 v1.5" fill="none" stroke="#d0d0d0" stroke-width="1"/><rect x="976" y="289" width="1.2" height="10" fill="#222"/><rect x="982" y="289" width="10" height="9.5" fill="#e4e4f0" stroke="#262a80" stroke-width="1"/><rect x="982" y="289" width="10" height="2" fill="#262a80"/><rect x="984" y="293" width="3" height="3" fill="#3a3a70"/><rect x="988" y="293" width="3" height="3" fill="#3a3a70"/></svg>
<div class="a" style="left:891px;top:308.5px;width:109px;height:1.5px;background:#262626"></div>
<div class="a" style="left:891px;top:315px;width:109px;height:1px;background:#3a3a3a"></div>
</body></html>
